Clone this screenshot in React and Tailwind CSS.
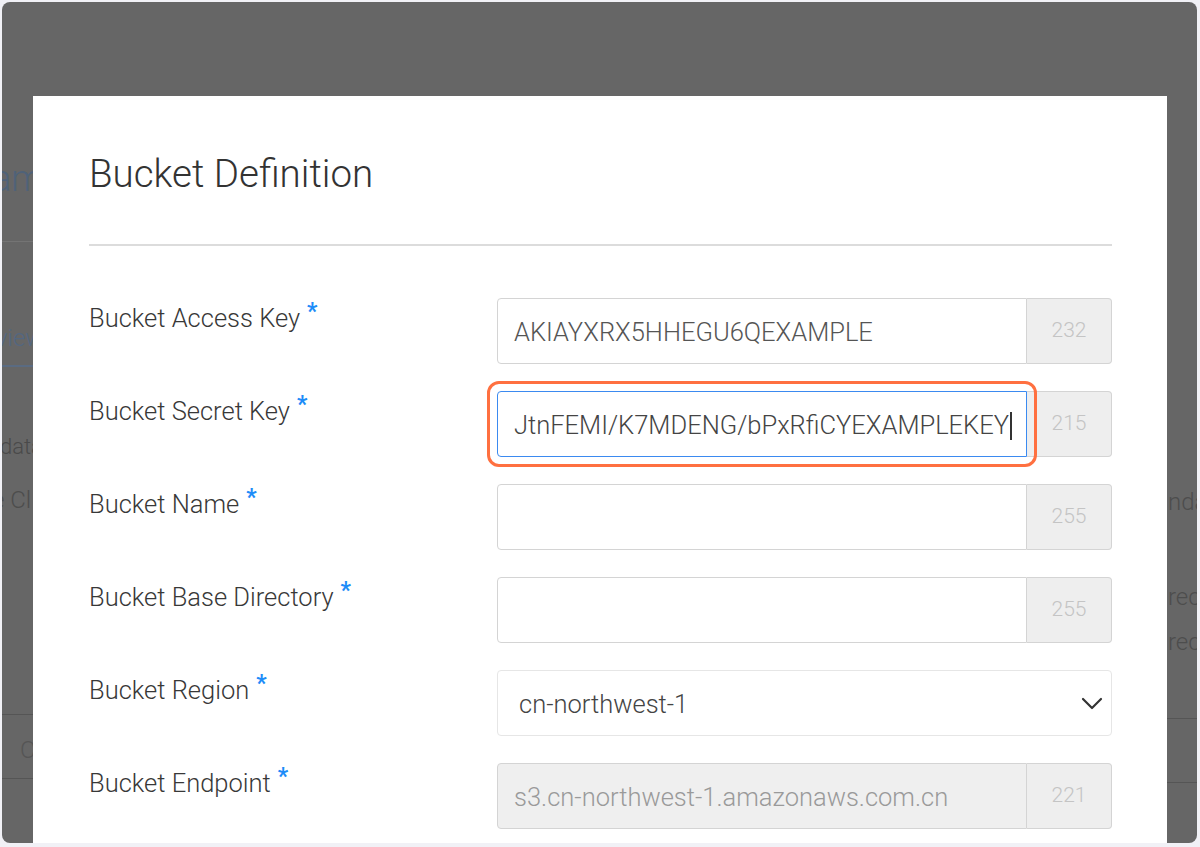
import React from "react";

const font = { fontFamily: "Roboto, 'Noto Sans', sans-serif" };

function Label({ children }) {
  return (
    <div className="w-[408px] shrink-0 pt-[4px] text-[25.5px] font-light text-[#383838] leading-[32px]">
      {children}
      <span className="ml-[7px] relative top-[-8px] text-[23px] font-bold text-[#1d8cf8]">*</span>
    </div>
  );
}

function InputGroup({ value, count, focused, disabled, cursor }) {
  return (
    <div className="relative flex h-[66px] w-[615px]">
      <div
        className={
          "flex flex-1 items-center rounded-l-[4px] border pl-[16px] pt-[3px] text-[25.5px] font-light " +
          (focused
            ? "border-[#3b8af0] bg-white text-[#444]"
            : disabled
            ? "border-[#d4d4d4] bg-[#efefef] text-[#9a9a9a]"
            : "border-[#d4d4d4] bg-white text-[#555]")
        }
      >
        <span>{value}</span>
        {cursor && <span className="ml-[1px] inline-block h-[28px] w-[2px] bg-[#333]" />}
      </div>
      <div className="flex w-[85px] items-center justify-center rounded-r-[4px] border border-l-0 border-[#d4d4d4] bg-[#eeeeee] text-[21px] font-light text-[#c4c4c4]">
        {count}
      </div>
      {focused && (
        <div className="pointer-events-none absolute left-[-10px] top-[-10px] h-[86px] w-[550px] rounded-[12px] border-[3px] border-[#ff7040]" />
      )}
    </div>
  );
}

function Row({ label, children }) {
  return (
    <div className="flex">
      <Label>{label}</Label>
      {children}
    </div>
  );
}

export default function App() {
  return (
    <div className="h-[847px] w-[1200px] bg-[#f1f1f6] pb-[4px] pl-[2px] pr-[3px] pt-[2px]" style={font}>
      <div className="relative h-full w-full overflow-hidden rounded-[8px] bg-[#666666]">
        {/* dimmed background page glimpses */}
        <div className="absolute left-[-10px] top-[150px] text-[36px] font-light text-[#4f6279]">am</div>
        <div className="absolute left-0 top-[239px] h-[1px] w-[31px] bg-[#747474]" />
        <div className="absolute left-[-6px] top-[318px] text-[24px] font-light text-[#536781]">view</div>
        <div className="absolute left-0 top-[363px] h-[2px] w-[31px] bg-[#5a6b82]" />
        <div className="absolute left-[-2px] top-[428px] text-[22px] font-light text-[#4a4a4a]">data</div>
        <div className="absolute left-[-10px] top-[480px] text-[24px] font-light text-[#4d4d4d]">e Cl</div>
        <div className="absolute left-0 top-[712px] h-[1px] w-[31px] bg-[#555]" />
        <div className="absolute left-[18px] top-[730px] text-[24px] font-light text-[#555]">C</div>
        <div className="absolute left-0 top-[776px] h-[1px] w-[31px] bg-[#555]" />

        <div className="absolute left-[1166px] top-[482px] text-[24px] font-light text-[#4d4d4d]">nda</div>
        <div className="absolute left-[1166px] top-[577px] text-[24px] font-light text-[#4d4d4d]">rec</div>
        <div className="absolute left-[1166px] top-[622px] text-[24px] font-light text-[#4d4d4d]">rec</div>
        <div className="absolute left-[1165px] top-[716px] h-[1px] w-[40px] bg-[#555]" />
        <div className="absolute left-[1165px] top-[780px] h-[1px] w-[40px] bg-[#555]" />

        {/* modal */}
        <div className="absolute left-[31px] top-[94px] h-[800px] w-[1134px] bg-white pl-[56px] pr-[55px]">
          <h1 className="pt-[52px] text-[38.5px] font-light leading-[52px] text-[#333]">Bucket Definition</h1>
          <div className="mt-[44px] h-[2px] w-full bg-[#dcdcdc]" />
          <div className="mt-[52px] flex flex-col gap-[27px]">
            <Row label="Bucket Access Key">
              <InputGroup value="AKIAYXRX5HHEGU6QEXAMPLE" count="232" />
            </Row>
            <Row label="Bucket Secret Key">
              <InputGroup value="JtnFEMI/K7MDENG/bPxRfiCYEXAMPLEKEY" count="215" focused cursor />
            </Row>
            <Row label="Bucket Name">
              <InputGroup value="" count="255" />
            </Row>
            <Row label="Bucket Base Directory">
              <InputGroup value="" count="255" />
            </Row>
            <Row label="Bucket Region">
              <div className="flex h-[66px] w-[615px] items-center justify-between rounded-[4px] border border-[#e6e6e6] bg-white pl-[21px] pr-[8px] pt-[2px] text-[25.5px] font-light text-[#444]">
                <span>cn-northwest-1</span>
                <svg width="22" height="14" viewBox="0 0 22 14">
                  <path d="M2 2 L11 11 L20 2" fill="none" stroke="#333" strokeWidth="2.2" strokeLinecap="round" strokeLinejoin="round" />
                </svg>
              </div>
            </Row>
            <Row label="Bucket Endpoint">
              <InputGroup value="s3.cn-northwest-1.amazonaws.com.cn" count="221" disabled />
            </Row>
          </div>
        </div>
      </div>
    </div>
  );
}
